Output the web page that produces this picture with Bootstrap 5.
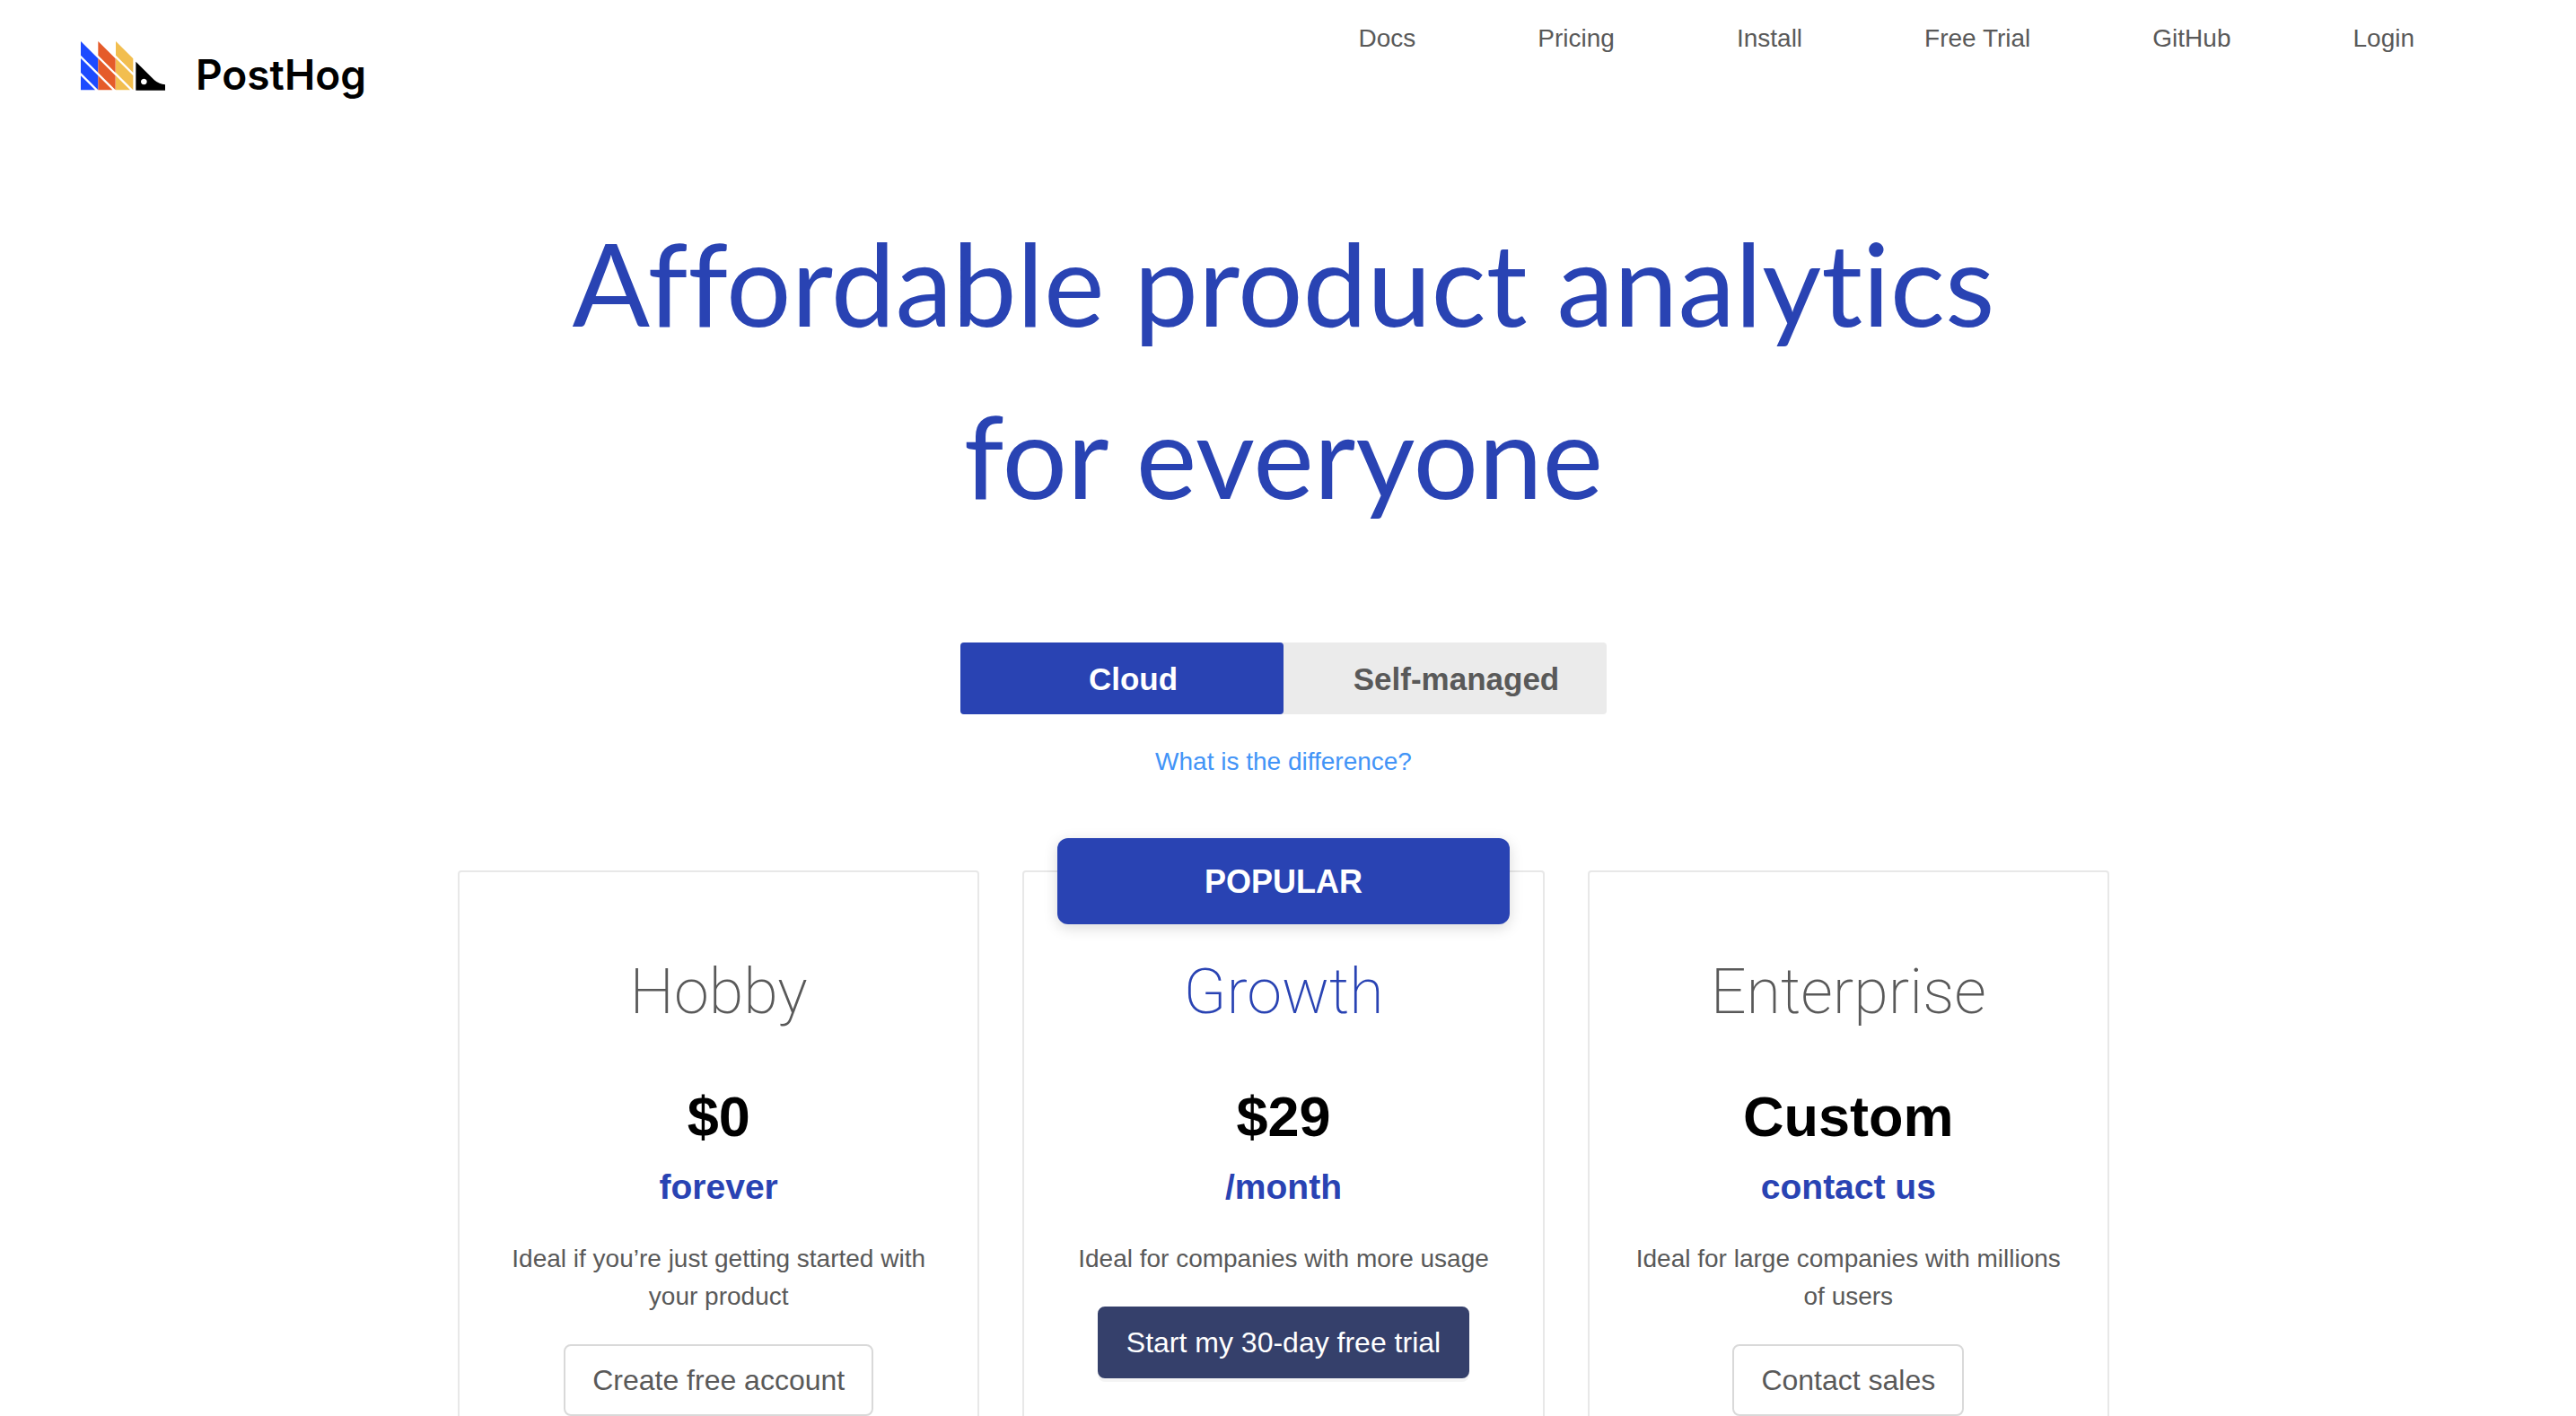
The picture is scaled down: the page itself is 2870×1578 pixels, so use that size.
<!DOCTYPE html>
<html lang="en">
<head>
<meta charset="utf-8">
<meta name="viewport" content="width=device-width, initial-scale=1">
<title>Pricing - PostHog</title>
<link rel="stylesheet" href="https://cdn.jsdelivr.net/npm/bootstrap@5.3.0/dist/css/bootstrap.min.css">
<style>
  :root { --ph-blue: #2943b3; --ph-gray: #595959; }
  body { font-family: "Liberation Sans", Arial, sans-serif; font-size: 28px; line-height: 42px; color: var(--ph-gray); height: 100vh; padding-right: 10px; }
  .site-header { height: 140px; padding: 22px 170px 0 90px; }
  .brand { gap: 34px; padding-top: 24px; color: #000; font: 600 46px/54px Inter, sans-serif; }
  .brand svg { width: 94px; height: 55px; }
  .brand span { padding-top: 10px; }
  .site-nav { gap: 136px; }
  .site-nav .nav-link { color: var(--ph-gray); padding: 0; }
  .hero-title { font: 400 128px/192px Lato, sans-serif; font-variant-ligatures: none; color: var(--ph-blue); max-width: 1840px; margin: 79px auto 113px; }
  .plan-switch { width: 720px; background: #ebebeb; border-radius: 4px; }
  .plan-switch .btn { flex: 1 1 0; height: 80px; padding: 14px 0 12px 25px; border: 0; border-radius: 4px !important; font-size: 35px; line-height: 54px; font-weight: 700; color: var(--ph-gray); }
  .plan-switch .btn-check:checked + .btn { background: var(--ph-blue); color: #fff; }
  .diff-link { color: #4294f7; margin-top: 32px; }
  .plans { display: grid; grid-template-columns: repeat(3, 1fr); gap: 48px; width: 1840px; max-width: 100%; margin: 100px auto 0; }
  .plan { border: 2px solid #e8e8e8; border-radius: 4px; padding: 79px 40px 0; min-height: 640px; }
  .plan-name { font: 200 70px/108px Roboto, sans-serif; margin: 0 0 43px; }
  .plan-price { font-size: 63px; line-height: 84px; font-weight: 700; color: #000; margin: 0 0 8px; }
  .plan-period { font-size: 39px; line-height: 58px; font-weight: 700; color: var(--ph-blue); margin: 0 0 30px; }
  .plan-text { margin: 0 0 32px; }
  .plan .btn { font-size: 32px; line-height: 48px; padding: 14px 30px; border: 2px solid #d9d9d9; border-radius: 8px; color: var(--ph-gray); background: #fff; }
  .plan .btn-trial { background: #35406b; border-color: #35406b; color: #fff; box-shadow: 0 4px 0 rgba(0,0,0,.045); }
  .popular-tag { top: -38px; left: 37px; right: 37px; height: 96px; border-radius: 12px; background: var(--ph-blue); color: #fff; font-size: 36px; line-height: 98px; font-weight: 700; box-shadow: 0 4px 16px rgba(0,0,0,.15); }
  .text-brand { color: var(--ph-blue); }
</style>
</head>
<body class="bg-white overflow-hidden">
<header class="site-header d-flex justify-content-between align-items-start">
  <a href="#" class="brand d-flex align-items-start text-decoration-none">
    <svg viewBox="0 0 282 165" aria-hidden="true">
      <defs><path id="quill" d="M0 0L58 58V105L0 47ZM0 57L58 115V163L0 105ZM0 115L48 163H0Z"/></defs>
      <use href="#quill" fill="#1d4aff"/>
      <use href="#quill" x="58" fill="#e55b2a"/>
      <use href="#quill" x="117" fill="#f2be4f"/>
      <path fill="#000" fill-rule="evenodd" d="M184 68L246 130Q262 144 282 145V164H184ZM211 125a10 10 0 1 0 .1 0Z"/>
    </svg>
    <span>PostHog</span>
  </a>
  <nav class="nav site-nav">
    <a class="nav-link" href="#">Docs</a>
    <a class="nav-link" href="#">Pricing</a>
    <a class="nav-link" href="#">Install</a>
    <a class="nav-link" href="#">Free Trial</a>
    <a class="nav-link" href="#">GitHub</a>
    <a class="nav-link" href="#">Login</a>
  </nav>
</header>
<main class="text-center">
  <h1 class="hero-title">Affordable product analytics<br>for everyone</h1>
  <div class="plan-switch d-flex mx-auto" role="group" aria-label="Hosting">
    <input class="btn-check" type="radio" name="hosting" id="cloud" checked>
    <label class="btn" for="cloud">Cloud</label>
    <input class="btn-check" type="radio" name="hosting" id="self">
    <label class="btn" for="self">Self-managed</label>
  </div>
  <a href="#" class="diff-link d-block text-decoration-none">What is the difference?</a>
  <div class="plans">
    <section class="plan">
      <h2 class="plan-name">Hobby</h2>
      <p class="plan-price">$0</p>
      <p class="plan-period">forever</p>
      <p class="plan-text">Ideal if you’re just getting started with your product</p>
      <button type="button" class="btn">Create free account</button>
    </section>
    <section class="plan position-relative">
      <div class="popular-tag position-absolute">POPULAR</div>
      <h2 class="plan-name text-brand">Growth</h2>
      <p class="plan-price">$29</p>
      <p class="plan-period">/month</p>
      <p class="plan-text">Ideal for companies with more usage</p>
      <button type="button" class="btn btn-trial">Start my 30-day free trial</button>
    </section>
    <section class="plan">
      <h2 class="plan-name">Enterprise</h2>
      <p class="plan-price">Custom</p>
      <p class="plan-period">contact us</p>
      <p class="plan-text">Ideal for large companies with millions of users</p>
      <button type="button" class="btn">Contact sales</button>
    </section>
  </div>
</main>
<script src="https://cdn.jsdelivr.net/npm/bootstrap@5.3.0/dist/js/bootstrap.bundle.min.js"></script>
</body>
</html>
